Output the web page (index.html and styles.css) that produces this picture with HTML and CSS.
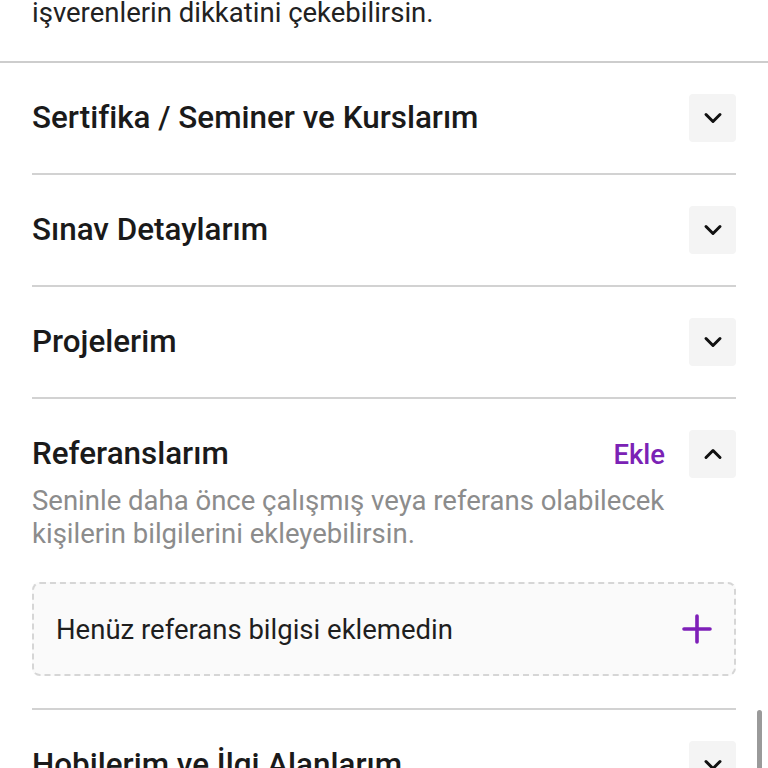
FILE: index.html
```html
<!DOCTYPE html>
<html lang="tr">

<head>
    <meta charset="UTF-8">
    <meta name="viewport" content="width=device-width, initial-scale=1.0">
    <title>Profilim</title>
    <link rel="stylesheet" href="styles.css">
</head>

<body>

    <div class="intro">
        <p>işverenlerin dikkatini çekebilirsin.</p>
    </div>

    <div class="sections">
        <div class="section">
            <div class="section-head">
                <h2>Sertifika / Seminer ve Kurslarım</h2>
                <button class="toggle">
                    <svg viewBox="0 0 24 24" width="24" height="24"><path d="M5 8.5l7 7 7-7" /></svg>
                </button>
            </div>
        </div>

        <div class="section">
            <div class="section-head">
                <h2>Sınav Detaylarım</h2>
                <button class="toggle">
                    <svg viewBox="0 0 24 24" width="24" height="24"><path d="M5 8.5l7 7 7-7" /></svg>
                </button>
            </div>
        </div>

        <div class="section">
            <div class="section-head">
                <h2>Projelerim</h2>
                <button class="toggle">
                    <svg viewBox="0 0 24 24" width="24" height="24"><path d="M5 8.5l7 7 7-7" /></svg>
                </button>
            </div>
        </div>

        <div class="section open">
            <div class="section-head">
                <h2>Referanslarım</h2>
                <a class="add-link" href="#">Ekle</a>
                <button class="toggle">
                    <svg viewBox="0 0 24 24" width="24" height="24"><path d="M5 15.5l7-7 7 7" /></svg>
                </button>
            </div>
            <p class="section-desc">Seninle daha önce çalışmış veya referans olabilecek kişilerin bilgilerini ekleyebilirsin.</p>
            <div class="empty-box">
                <span>Henüz referans bilgisi eklemedin</span>
                <svg class="plus" viewBox="0 0 30 30" width="30" height="30"><path d="M15 2v26M2 15h26" /></svg>
            </div>
        </div>

        <div class="section">
            <div class="section-head">
                <h2>Hobilerim ve İlgi Alanlarım</h2>
                <button class="toggle">
                    <svg viewBox="0 0 24 24" width="24" height="24"><path d="M5 8.5l7 7 7-7" /></svg>
                </button>
            </div>
        </div>
    </div>

    <div class="scrollbar"></div>

</body>

</html>
```

FILE: styles.css
```css
body {
    margin: 0;
    font-family: Roboto, 'Noto Sans', sans-serif;
    background-color: #fff;
    color: #1c1c1c;
}

.intro {
    padding: 0 32px;
    border-bottom: 2px solid #cdcdcd;
}

.intro p {
    margin: -4px 0 0;
    padding-bottom: 32px;
    font-size: 27.5px;
    line-height: 33px;
    color: #222;
}

.sections {
    padding: 0 32px;
}

.section {
    border-bottom: 2px solid #d2d2d2;
}

.section-head {
    display: flex;
    align-items: center;
    padding: 31px 0;
}

.section-head h2 {
    flex: 1;
    margin: 0;
    font-size: 31.4px;
    line-height: 40px;
    font-weight: 500;
    color: #1a1a1a;
}

.toggle {
    width: 47px;
    height: 48px;
    display: flex;
    align-items: center;
    justify-content: center;
    padding: 0;
    border: none;
    border-radius: 4px;
    background-color: #f4f4f4;
}

.toggle path {
    fill: none;
    stroke: #111;
    stroke-width: 3;
    stroke-linecap: round;
    stroke-linejoin: round;
}

.add-link {
    margin-right: 24px;
    font-size: 27.5px;
    font-weight: 500;
    color: #7b22b5;
    text-decoration: none;
}

.open {
    padding-bottom: 32px;
}

.open .section-head {
    padding-bottom: 6px;
}

.section-desc {
    margin: 0 0 32px;
    font-size: 27.5px;
    line-height: 33px;
    color: #8c8c8c;
}

.empty-box {
    display: flex;
    align-items: center;
    justify-content: space-between;
    height: 90px;
    padding: 0 22px;
    border: 2px dashed #d6d6d6;
    border-radius: 8px;
    background-color: #fafafa;
    font-size: 27.5px;
    color: #1e1e1e;
}

.plus path {
    fill: none;
    stroke: #7e1fb8;
    stroke-width: 3.6;
    stroke-linecap: round;
}

.scrollbar {
    position: fixed;
    right: 6px;
    top: 710px;
    width: 5px;
    height: 70px;
    border-radius: 3px;
    background-color: #9a9a9a;
}
```
